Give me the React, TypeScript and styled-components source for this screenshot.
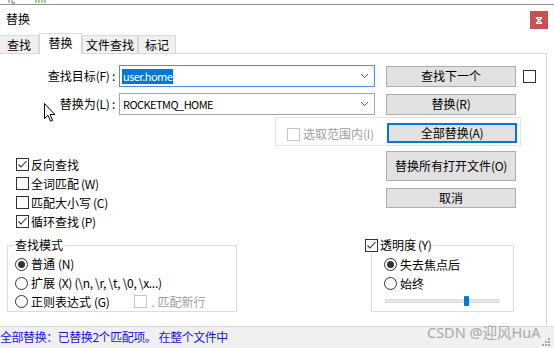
import React from "react";
import styled, { createGlobalStyle } from "styled-components";

const Global = createGlobalStyle`
  html, body { margin: 0; padding: 0; background: #ffffff; }
  body {
    font-family: "Noto Sans CJK SC", "Noto Sans", sans-serif;
    font-size: 12px;
    color: #000;
  }
  * { box-sizing: border-box; }
`;

const Window = styled.div`
  position: relative;
  width: 554px;
  height: 348px;
  overflow: hidden;
  background: #fff;
  display: flex;
  flex-direction: column;
`;

const TopStrip = styled.div`
  height: 5px;
  border-bottom: 1px solid #8e8e8e;
  overflow: hidden;
  padding-left: 6px;
  display: flex;
  align-items: flex-start;
`;

const TitleBar = styled.div`
  height: 28px;
  display: flex;
  align-items: center;
  padding-left: 6px;
`;

const Title = styled.div`
  font-size: 12px;
  line-height: 14px;
`;

const CloseBtn = styled.div`
  margin-left: auto;
  margin-right: 6px;
  margin-top: 2px;
  width: 18px;
  height: 18px;
  background: #c75050;
  display: flex;
  align-items: center;
  justify-content: center;
`;

const TabBar = styled.div`
  height: 20px;
  display: flex;
  align-items: flex-end;
  position: relative;
  z-index: 1;
`;

const Tab = styled.div<{ $w: number; $active?: boolean }>`
  width: ${(p) => p.$w}px;
  height: ${(p) => (p.$active ? 21 : 18)}px;
  margin-bottom: ${(p) => (p.$active ? -1 : 0)}px;
  border: 1px solid #d9d9d9;
  border-bottom: none;
  background: ${(p) => (p.$active ? "#ffffff" : "#f0f0f0")};
  display: flex;
  align-items: center;
  justify-content: center;
  padding-bottom: ${(p) => (p.$active ? 2 : 0)}px;
  font-size: 12px;
  line-height: 14px;
  &:first-child { border-left: none; }
`;

const Panel = styled.div`
  width: 547px;
  height: 273px;
  border-top: 1px solid #d9d9d9;
  border-right: 1px solid #d9d9d9;
  display: flex;
  flex-direction: column;
  position: relative;
`;

const FieldRow = styled.div<{ $mt: number }>`
  display: flex;
  align-items: center;
  height: 22px;
  margin-top: ${(p) => p.$mt}px;
`;

const FieldLabel = styled.div`
  width: 116px;
  padding-right: 1px;
  text-align: right;
  white-space: nowrap;
  line-height: 14px;
`;

const Combo = styled.div<{ $focus?: boolean }>`
  margin-left: 3px;
  width: 256px;
  height: 22px;
  border: 1px solid ${(p) => (p.$focus ? "#4a93e0" : "#a6a6a6")};
  display: flex;
  align-items: center;
  padding-left: 2px;
  padding-right: 5px;
  background: #fff;
`;

const ComboText = styled.span<{ $sel?: boolean }>`
  background: ${(p) => (p.$sel ? "#0078d7" : "transparent")};
  color: ${(p) => (p.$sel ? "#fff" : "#000")};
  line-height: 15px;
  padding: 0 1px;
  font-size: 11px;
  letter-spacing: -0.55px;
`;

const Chevron = styled.svg`
  margin-left: auto;
`;

const Button = styled.div<{ $h: number; $focus?: boolean; $ml?: number; $mt?: number }>`
  width: 130px;
  height: ${(p) => p.$h}px;
  margin-left: ${(p) => (p.$ml === undefined ? "0" : p.$ml < 0 ? "auto" : `${p.$ml}px`)};
  margin-top: ${(p) => p.$mt ?? 0}px;
  border: 1px solid ${(p) => (p.$focus ? "#0078d7" : "#adadad")};
  box-shadow: ${(p) => (p.$focus ? "inset 0 0 0 1px #0078d7" : "none")};
  background: #e1e1e1;
  display: flex;
  align-items: center;
  justify-content: center;
  line-height: 14px;
  flex-shrink: 0;
`;

const Box = styled.div<{ $disabled?: boolean; $ml?: number }>`
  width: 13px;
  height: 13px;
  margin-left: ${(p) => p.$ml ?? 0}px;
  border: 1px solid ${(p) => (p.$disabled ? "#c6c6c6" : "#333333")};
  background: #fff;
  display: flex;
  align-items: center;
  justify-content: center;
  flex-shrink: 0;
`;

const Circle = styled.div`
  width: 13px;
  height: 13px;
  border-radius: 50%;
  border: 1px solid #333;
  background: #fff;
  display: flex;
  align-items: center;
  justify-content: center;
  flex-shrink: 0;
`;

const Dot = styled.div`
  width: 7px;
  height: 7px;
  border-radius: 50%;
  background: #333;
`;

const ScopeBox = styled.div`
  margin-top: 2px;
  margin-left: 275px;
  width: 246px;
  height: 29px;
  border: 1px solid #e6e6e6;
  display: flex;
  align-items: flex-start;
  padding-left: 11px;
  padding-right: 3px;
`;

const Inline = styled.div<{ $gray?: boolean; $mt?: number; $gap?: number; $ml?: number }>`
  display: flex;
  align-items: center;
  gap: ${(p) => p.$gap ?? 3}px;
  margin-top: ${(p) => p.$mt ?? 0}px;
  margin-left: ${(p) => p.$ml ?? 0}px;
  color: ${(p) => (p.$gray ? "#a0a0a0" : "#000")};
  line-height: 14px;
  white-space: nowrap;
`;

const Middle = styled.div`
  display: flex;
  height: 85px;
`;

const OptionCol = styled.div`
  width: 386px;
  padding-left: 16px;
  padding-top: 9px;
  display: flex;
  flex-direction: column;
`;

const OptionRow = styled.div`
  height: 19px;
  display: flex;
  align-items: center;
  gap: 2px;
  line-height: 14px;
  white-space: nowrap;
`;

const ButtonCol = styled.div`
  display: flex;
  flex-direction: column;
  gap: 7px;
  padding-top: 5px;
`;

const Bottom = styled.div`
  display: flex;
  margin-top: 14px;
`;

const Group = styled.div<{ $w: number; $ml: number; $pl: number }>`
  position: relative;
  width: ${(p) => p.$w}px;
  height: 67px;
  margin-left: ${(p) => p.$ml}px;
  border: 1px solid #dcdcdc;
  padding-top: 9px;
  padding-left: ${(p) => p.$pl}px;
  display: flex;
  flex-direction: column;
`;

const Legend = styled.div<{ $left: number }>`
  position: absolute;
  top: -9px;
  left: ${(p) => p.$left}px;
  background: #fff;
  padding: 0 1px;
  line-height: 16px;
  display: flex;
  align-items: center;
  gap: 2px;
`;

const RadioRow = styled.div`
  height: 19px;
  display: flex;
  align-items: center;
  gap: 3px;
  line-height: 14px;
  white-space: nowrap;
`;

const Slider = styled.div`
  position: relative;
  width: 114px;
  height: 10px;
  margin-top: 3px;
  margin-left: 1px;
  display: flex;
  align-items: center;
`;

const Track = styled.div`
  width: 100%;
  height: 4px;
  background: #e7e7e7;
  border: 1px solid #dcdcdc;
`;

const Thumb = styled.div`
  position: absolute;
  top: 0;
  width: 5px;
  height: 10px;
  background: #0078d7;
  border-radius: 1px;
`;

const StatusBar = styled.div`
  height: 22px;
  background: #f0f0f0;
  border-top: 1px solid #dadada;
  display: flex;
  align-items: center;
  padding-bottom: 1px;
`;

const StatusText = styled.div`
  color: #1515e6;
  font-size: 12px;
  line-height: 14px;
  letter-spacing: -0.45px;
  white-space: nowrap;
`;

const Watermark = styled.div`
  position: absolute;
  left: 427px;
  top: 323px;
  font-family: "Noto Sans", "Noto Sans CJK SC", sans-serif;
  font-size: 14.5px;
  line-height: 18px;
  color: #a9a9a9;
  white-space: nowrap;
`;

const Grip = styled.svg`
  position: absolute;
  right: 3px;
  bottom: 1px;
`;

const Cursor = styled.svg`
  position: absolute;
  left: 44px;
  top: 103px;
`;

const Mn = styled.span`
  letter-spacing: -0.3px;
`;

const Check = () => (
  <svg width="11" height="11" viewBox="0 0 11 11">
    <path d="M1.5 5.5 L4 8 L9.5 2" fill="none" stroke="#333" strokeWidth="1.1" />
  </svg>
);

const CheckBox = ({ checked, disabled, ml }: { checked?: boolean; disabled?: boolean; ml?: number }) => (
  <Box $disabled={disabled} $ml={ml}>{checked ? <Check /> : null}</Box>
);

const Radio = ({ on }: { on?: boolean }) => <Circle>{on ? <Dot /> : null}</Circle>;

const Chev = () => (
  <Chevron width="9" height="6" viewBox="0 0 9 6">
    <path d="M1 1 L4.5 4.5 L8 1" fill="none" stroke="#606060" strokeWidth="1" />
  </Chevron>
);

export default function App() {
  const sliderValue = 69;
  return (
    <Window>
      <Global />
      <TopStrip>
        <svg width="60" height="4" viewBox="0 0 60 4">
          <g stroke="#3a9a48" strokeWidth="1" fill="none">
            <path d="M3 0 V3 M6 0 V3 H9" />
            <path d="M30 0 V3 M33 0 V3 M36 0 V3 M39 0 V3" />
          </g>
        </svg>
      </TopStrip>
      <TitleBar>
        <Title>替换</Title>
        <CloseBtn>
          <svg width="8" height="7" viewBox="0 0 8 7">
            <path d="M1 0.5 L7 6.5 M7 0.5 L1 6.5 M1.5 0.5 H6.5 M1.5 6.5 H6.5" stroke="#fff" strokeWidth="1.3" fill="none" />
          </svg>
        </CloseBtn>
      </TitleBar>
      <TabBar>
        <Tab $w={39}>查找</Tab>
        <Tab $w={43} $active>替换</Tab>
        <Tab $w={56}>文件查找</Tab>
        <Tab $w={38}>标记</Tab>
      </TabBar>
      <Panel>
        <FieldRow $mt={11}>
          <FieldLabel>查找目标<Mn>(F) :</Mn></FieldLabel>
          <Combo $focus>
            <ComboText $sel>user.home</ComboText>
            <Chev />
          </Combo>
          <Button $h={21} $ml={11}>查找下一个</Button>
          <CheckBox ml={7} />
        </FieldRow>
        <FieldRow $mt={6}>
          <FieldLabel>替换为<Mn>(L) :</Mn></FieldLabel>
          <Combo>
            <ComboText>ROCKETMQ_HOME</ComboText>
            <Chev />
          </Combo>
          <Button $h={21} $ml={11}>替换<Mn>(R)</Mn></Button>
        </FieldRow>
        <ScopeBox>
          <Inline $gray $mt={9}>
            <CheckBox disabled />
            <span>选取范围内<Mn>(I)</Mn></span>
          </Inline>
          <Button $h={20} $focus $ml={-1} $mt={5}>全部替换<Mn>(A)</Mn></Button>
        </ScopeBox>
        <Middle>
          <OptionCol>
            <OptionRow><CheckBox checked />反向查找</OptionRow>
            <OptionRow><CheckBox />全词匹配<Mn>(W)</Mn></OptionRow>
            <OptionRow><CheckBox />匹配大小写<Mn>(C)</Mn></OptionRow>
            <OptionRow><CheckBox checked />循环查找<Mn>(P)</Mn></OptionRow>
          </OptionCol>
          <ButtonCol>
            <Button $h={30}>替换所有打开文件<Mn>(O)</Mn></Button>
            <Button $h={20}>取消</Button>
          </ButtonCol>
        </Middle>
        <Bottom>
          <Group $w={230} $ml={7} $pl={7}>
            <Legend $left={6}>查找模式</Legend>
            <RadioRow><Radio on />普通<Mn>(N)</Mn></RadioRow>
            <RadioRow><Radio />扩展<Mn>(X) (\n, \r, \t, \0, \x...)</Mn></RadioRow>
            <RadioRow>
              <Radio />正则表达式<Mn>(G)</Mn>
              <Inline $gray $ml={21} $gap={5}>
                <CheckBox disabled />
                <span>. 匹配新行</span>
              </Inline>
            </RadioRow>
          </Group>
          <Group $w={143} $ml={134} $pl={12}>
            <Legend $left={-8}>
              <CheckBox checked />透明度<Mn>(Y)</Mn>
            </Legend>
            <RadioRow><Radio on />失去焦点后</RadioRow>
            <RadioRow><Radio />始终</RadioRow>
            <Slider>
              <Track />
              <Thumb style={{ left: `${sliderValue}%` }} />
            </Slider>
          </Group>
        </Bottom>
      </Panel>
      <StatusBar>
        <StatusText>全部替换：已替换2个匹配项。 在整个文件中</StatusText>
      </StatusBar>
      <Watermark>CSDN @迎风HuA</Watermark>
      <Grip width="9" height="9" viewBox="0 0 9 9">
        <g fill="#a8a8a8">
          <rect x="6" y="0" width="2" height="2" />
          <rect x="3" y="3" width="2" height="2" />
          <rect x="6" y="3" width="2" height="2" />
          <rect x="0" y="6" width="2" height="2" />
          <rect x="3" y="6" width="2" height="2" />
          <rect x="6" y="6" width="2" height="2" />
        </g>
      </Grip>
      <Cursor width="12" height="19" viewBox="0 0 12 19">
        <path d="M0.5 0.5 L0.5 15.5 L4 12.3 L6.6 18.3 L8.6 17.4 L6.1 11.5 L10.8 11.5 Z" fill="#fff" stroke="#000" strokeWidth="1" strokeLinejoin="round" />
      </Cursor>
    </Window>
  );
}
